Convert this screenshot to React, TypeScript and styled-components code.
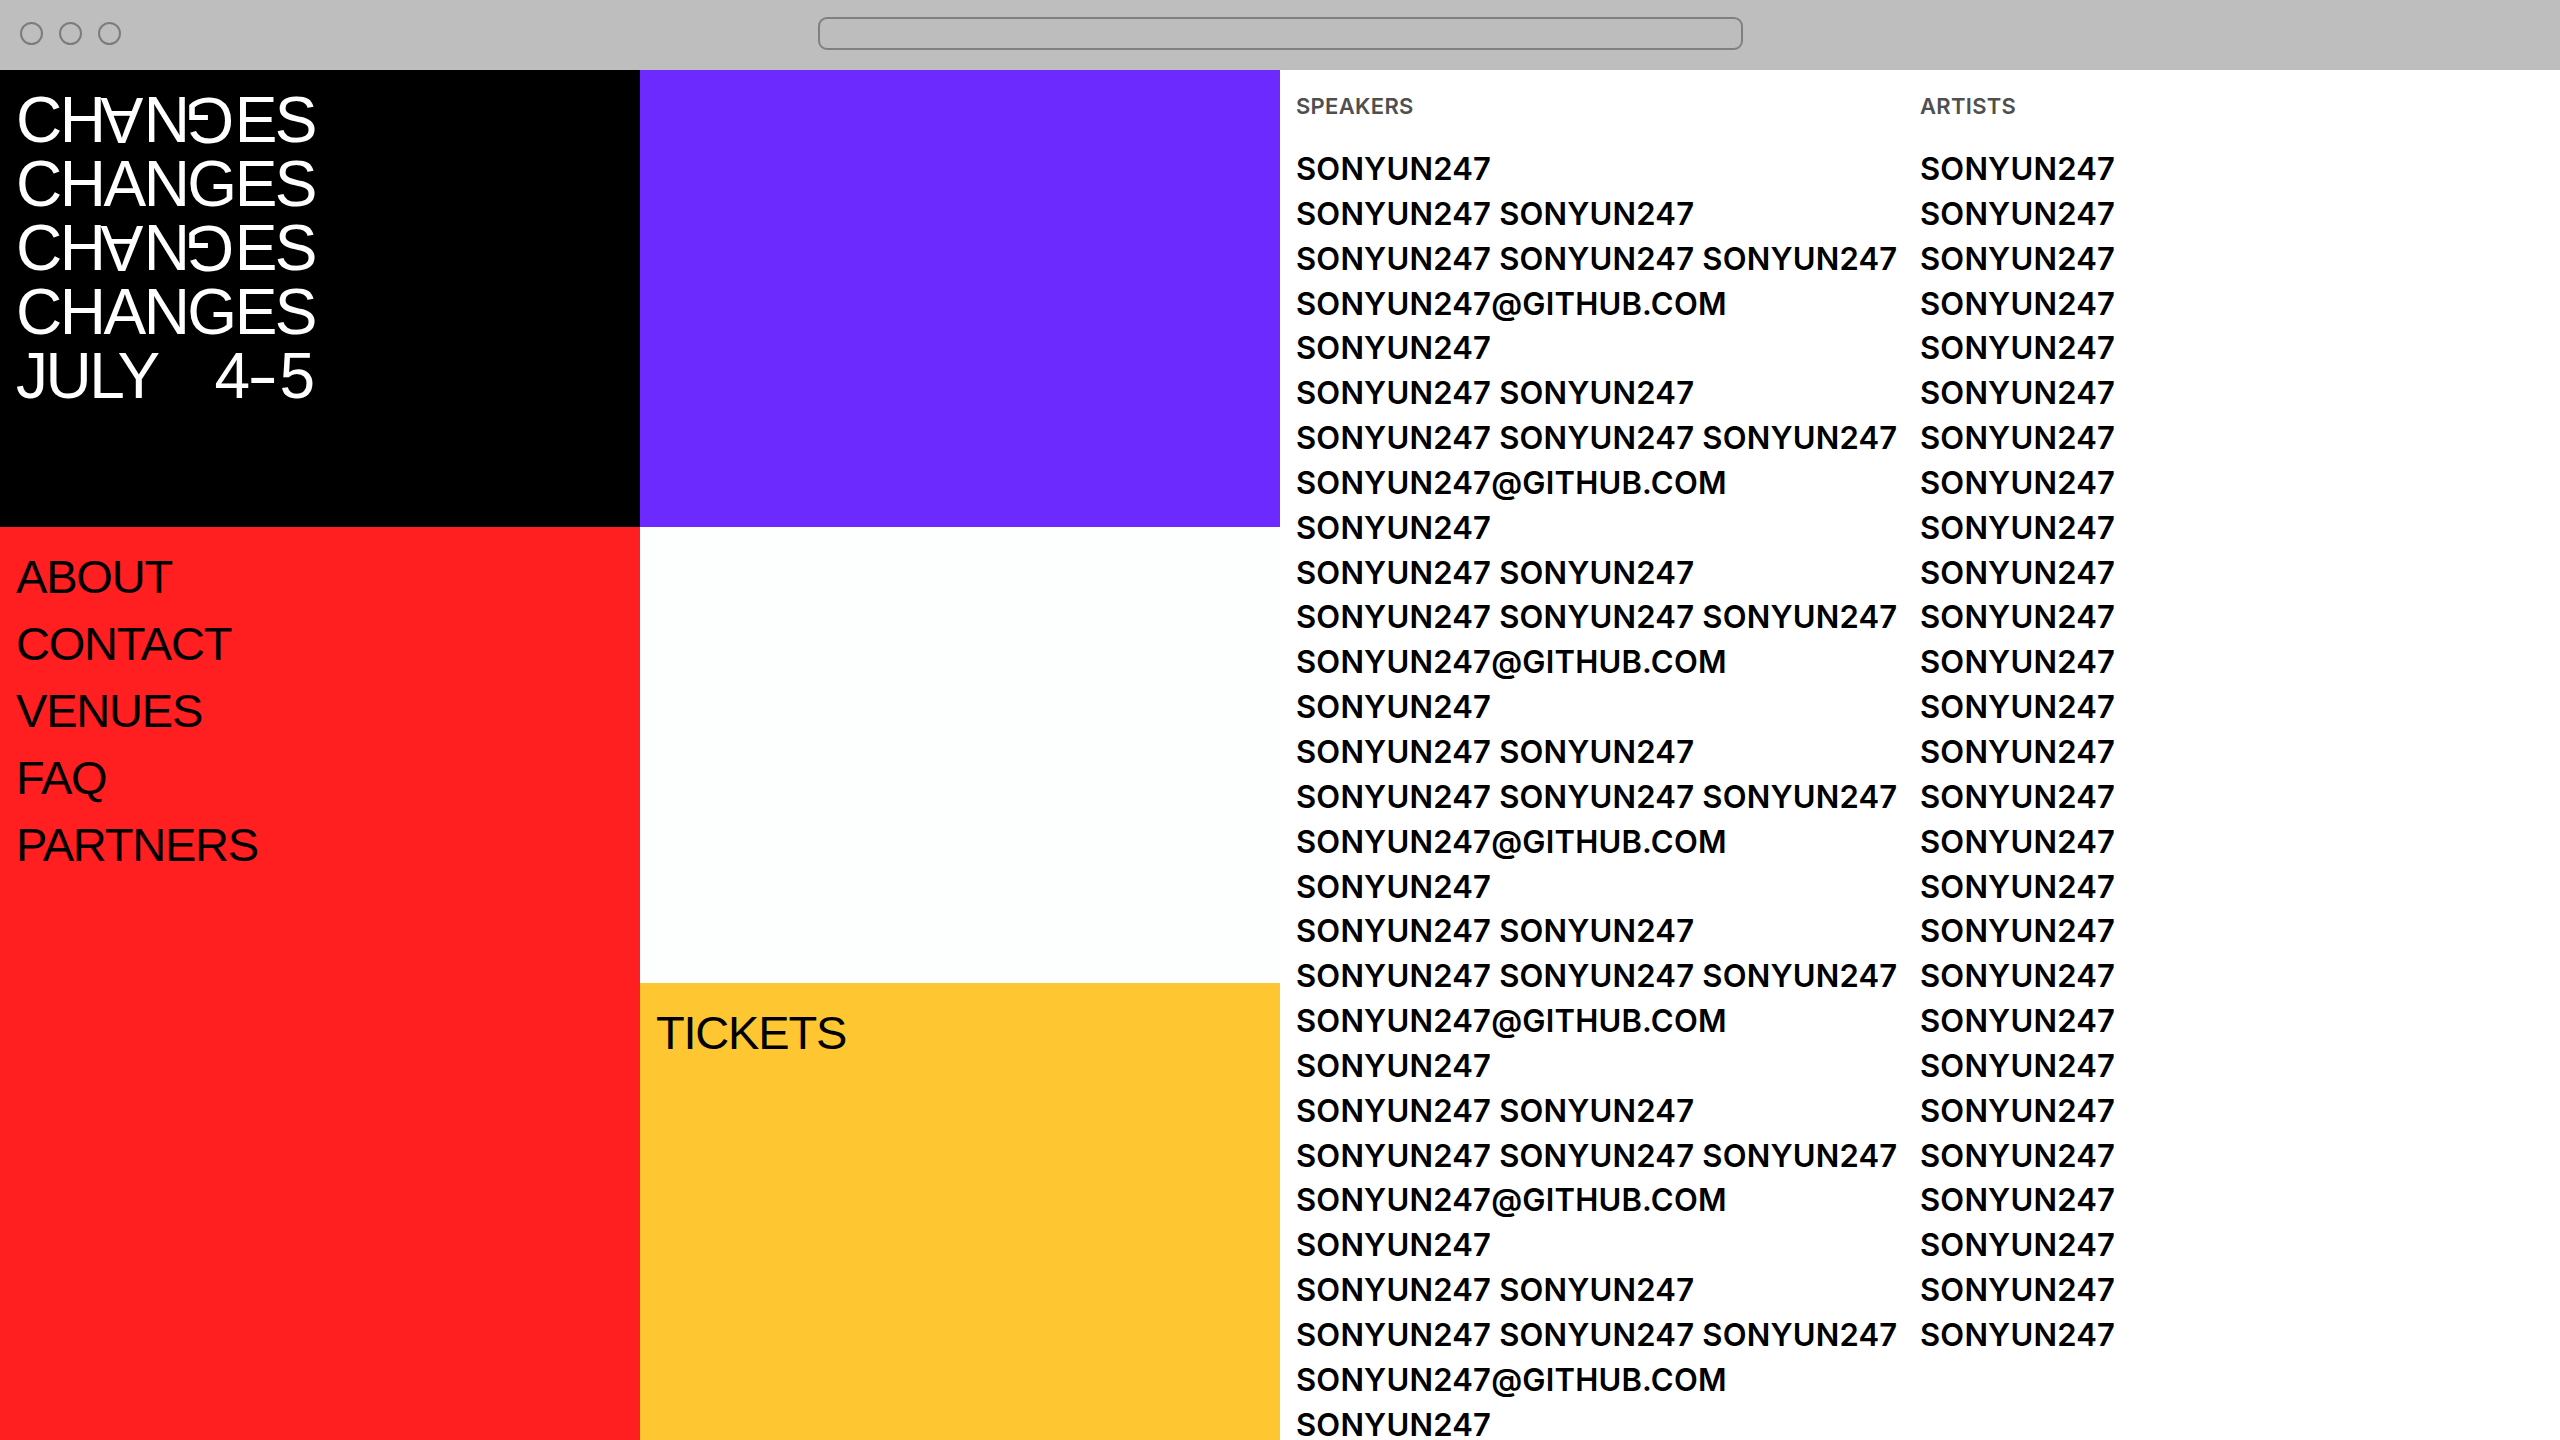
import styled, { createGlobalStyle } from 'styled-components';

const speakerPattern = [
  'SONYUN247',
  'SONYUN247 SONYUN247',
  'SONYUN247 SONYUN247 SONYUN247',
  'SONYUN247@GITHUB.COM',
];

const speakers = [
  ...Array.from({ length: 7 }).flatMap(() => speakerPattern),
  'SONYUN247',
  'SONYUN247 SONYUN247',
];

const artists = Array.from({ length: 27 }).map(() => 'SONYUN247');

const navItems = ['ABOUT', 'CONTACT', 'VENUES', 'FAQ', 'PARTNERS'];

const App = () => {
  return (
    <>
      <GlobalStyle />
      <Window>
        <Chrome>
          <Dots>
            <Dot />
            <Dot />
            <Dot />
          </Dots>
          <UrlBar />
        </Chrome>
        <Page>
          <Tile $bg="#000">
            <Title>
              <span>
                CH<Flip>A</Flip>N<Flip>G</Flip>ES
              </span>
              <span>CHANGES</span>
              <span>
                CH<Flip>A</Flip>N<Flip>G</Flip>ES
              </span>
              <span>CHANGES</span>
              <DateLine>
                <span>JULY</span>
                <Days>
                  4<Dash>-</Dash>5
                </Days>
              </DateLine>
            </Title>
          </Tile>
          <Tile $bg="#6d2aff" />
          <Lineup>
            <Column>
              <Heading>SPEAKERS</Heading>
              {speakers.map((name, i) => (
                <Name key={i}>{name}</Name>
              ))}
            </Column>
            <Column $flush>
              <Heading>ARTISTS</Heading>
              {artists.map((name, i) => (
                <Name key={i}>{name}</Name>
              ))}
            </Column>
          </Lineup>
          <Tile $bg="#ff1e20" $rows={2}>
            <Nav>
              {navItems.map((item) => (
                <NavLink key={item} href="#">
                  {item}
                </NavLink>
              ))}
            </Nav>
          </Tile>
          <Tile $bg="#fdfefe" />
          <Tile $bg="#fec732">
            <NavLink href="#">TICKETS</NavLink>
          </Tile>
        </Page>
      </Window>
    </>
  );
};

export default App;

const GlobalStyle = createGlobalStyle`
  html, body {
    margin: 0;
    padding: 0;
    overflow: hidden;
    background: #fff;
  }
  * {
    box-sizing: border-box;
  }
`;

const Window = styled.div`
  display: flex;
  flex-direction: column;
  width: 100vw;
  height: 100vh;
  overflow: hidden;
`;

const Chrome = styled.header`
  display: grid;
  grid-template-columns: 1fr 925px 1fr;
  align-items: center;
  flex: none;
  height: 70px;
  background: #bebebe;
`;

const Dots = styled.div`
  display: flex;
  gap: 16px;
  padding-left: 20px;
  margin-top: -3px;
`;

const Dot = styled.span`
  width: 23px;
  height: 23px;
  border-radius: 50%;
  border: 2px solid #7c7c7c;
`;

const UrlBar = styled.div`
  height: 33px;
  margin-top: -3px;
  border: 2px solid #808080;
  border-radius: 9px;
  background: #bdbdbd;
`;

const Page = styled.main`
  flex: 1;
  min-height: 0;
  display: grid;
  grid-template-columns: 640px 640px 1fr;
  grid-template-rows: repeat(3, 1fr);
`;

const Tile = styled.section<{ $bg: string; $rows?: number }>`
  background: ${({ $bg }) => $bg};
  grid-row: span ${({ $rows }) => $rows || 1};
  padding: 16px 16px;
  min-height: 0;
`;

const Title = styled.h1`
  display: inline-flex;
  flex-direction: column;
  margin: 0;
  padding-top: 2px;
  color: #fff;
  font-family: 'Liberation Sans', Arial, sans-serif;
  font-weight: 400;
  font-size: 64px;
  line-height: 64px;
  letter-spacing: -2.5px;
`;

const Flip = styled.span`
  display: inline-block;
  transform: rotate(180deg);
`;

const DateLine = styled.span`
  display: flex;
  justify-content: space-between;
`;

const Days = styled.span`
  display: flex;
  align-items: baseline;
  letter-spacing: 0;
`;

const Dash = styled.span`
  display: inline-block;
  margin: 0 6px 0 2px;
  transform: scaleX(1.45);
`;

const Nav = styled.nav`
  display: flex;
  flex-direction: column;
`;

const NavLink = styled.a`
  display: block;
  color: #000;
  text-decoration: none;
  font-family: 'Liberation Sans', Arial, sans-serif;
  font-size: 47px;
  line-height: 67px;
  letter-spacing: -1.2px;
`;

const Lineup = styled.section`
  grid-row: 1 / 4;
  grid-column: 3;
  min-height: 0;
  overflow: hidden;
  display: grid;
  grid-template-columns: 640px 1fr;
  align-items: start;
  padding-top: 23px;
  background: #fff;
`;

const Column = styled.div<{ $flush?: boolean }>`
  display: flex;
  flex-direction: column;
  padding-left: ${({ $flush }) => ($flush ? '0' : '16px')};
`;

const Heading = styled.h2`
  margin: 0 0 28px;
  color: #4f4f4f;
  font-family: Inter, 'Noto Sans', sans-serif;
  font-weight: 600;
  font-size: 22px;
  line-height: 26px;
  letter-spacing: 0.3px;
`;

const Name = styled.p`
  margin: 0;
  color: #000;
  font-family: Inter, 'Noto Sans', sans-serif;
  font-weight: 600;
  font-size: 31px;
  line-height: 44.85px;
  letter-spacing: 0.2px;
  white-space: nowrap;
`;
